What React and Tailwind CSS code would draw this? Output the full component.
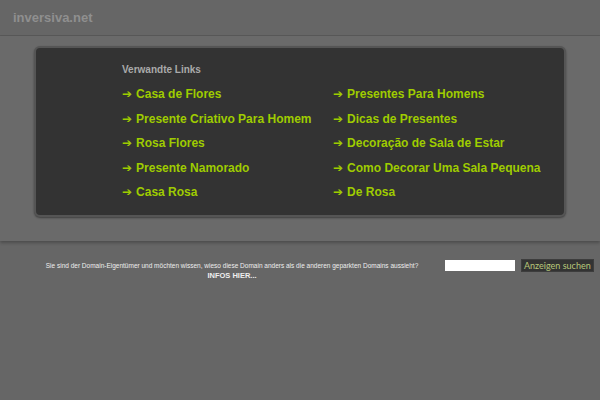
import React from "react";

const left = [
  "Casa de Flores",
  "Presente Criativo Para Homem",
  "Rosa Flores",
  "Presente Namorado",
  "Casa Rosa",
];

const right = [
  "Presentes Para Homens",
  "Dicas de Presentes",
  "Decoração de Sala de Estar",
  "Como Decorar Uma Sala Pequena",
  "De Rosa",
];

const LinkItem = ({ label }) => (
  <a href="#" className="flex items-center h-[24.5px] text-[#9fcc00] font-bold text-[12px] leading-none">
    <span className="mr-[4px] text-[12px] font-bold font-['DejaVu_Sans',sans-serif]">➔</span>
    {label}
  </a>
);

export default function App() {
  return (
    <div className="min-h-screen bg-[#666666] font-['Liberation_Sans',Arial,sans-serif]">
      {/* Header */}
      <div className="h-[36px] flex items-center px-[13px] border-b border-[#595959]">
        <span className="text-[#8f8f8f] font-bold text-[13px]">inversiva.net</span>
      </div>

      {/* Main */}
      <div className="bg-[#6a6a6a] pt-[10px] pb-[24px] shadow-[0_2px_3px_rgba(0,0,0,0.25)]">
        <div className="mx-[34px] h-[171px] rounded-[6px] bg-[#333333] border-2 border-[#555555] shadow-[0_1px_2px_rgba(0,0,0,0.4)] pl-[86px] pt-[14px]">
          <div className="text-[#aaaaaa] font-bold text-[10px] mb-[5px]">Verwandte Links</div>
          <div className="flex">
            <div className="w-[211px]">
              {left.map((l) => (
                <LinkItem key={l} label={l} />
              ))}
            </div>
            <div>
              {right.map((l) => (
                <LinkItem key={l} label={l} />
              ))}
            </div>
          </div>
        </div>
      </div>

      {/* Footer */}
      <div className="flex items-start pt-[20px]">
        <div className="w-[440px] text-center text-[#eeeeee] text-[6.5px] leading-[10px] pl-[24px]">
          <div>
            Sie sind der Domain-Eigentümer und möchten wissen, wieso diese Domain anders als die anderen geparkten Domains aussieht?
          </div>
          <div className="font-bold text-[7.5px]">INFOS HIER...</div>
        </div>
        <div className="flex items-center ml-[5px] mt-[-2px]">
          <input className="w-[70px] h-[11px] bg-white border-0 outline-none" />
          <button className="ml-[6px] h-[13px] px-[2px] bg-[#333333] border border-[#3d3d3d] text-[#b8c87a] text-[9px] leading-none font-['Lato',sans-serif]">
            Anzeigen suchen
          </button>
        </div>
      </div>
    </div>
  );
}
